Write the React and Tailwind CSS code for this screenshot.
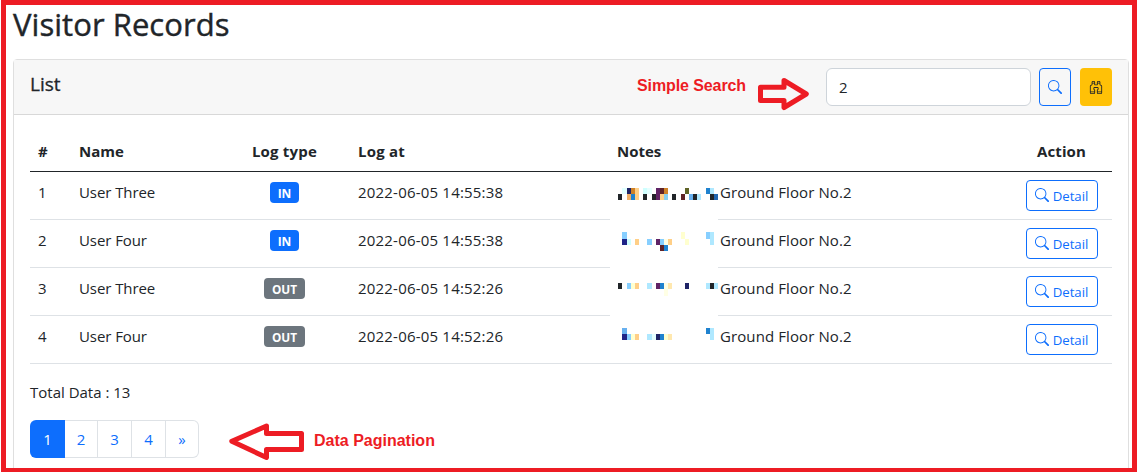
import React from "react";
import { BsSearch, BsBinoculars } from "react-icons/bs";

// Pixelated redaction blocks: [x, y, width, height, colour]
const K = "#212529";
const MASKS = [
  [
    [12, 8, 5, 6, "#e0ffff"], [17, 8, 4, 6, "#1f2466"], [21, 8, 4, 6, "#cf8227"], [25, 8, 4, 6, "#ffcf87"],
    [33, 8, 4, 6, "#cfffff"], [37, 8, 5, 6, "#e5ffff"], [46, 8, 4, 6, "#5f2365"], [50, 8, 4, 6, "#5f2327"],
    [54, 8, 4, 6, "#cf8227"], [75, 8, 4, 6, "#5f6327"], [96, 8, 4, 6, "#1f82cf"], [100, 8, 4, 6, "#afe8ff"],
    [8, 14, 4, 6, K], [17, 14, 4, 6, "#efb067"], [21, 14, 4, 6, "#1f82cf"], [25, 14, 4, 6, "#ffcf87"],
    [33, 14, 4, 6, K], [42, 14, 4, 6, K], [46, 14, 4, 6, "#5f2365"], [50, 14, 4, 6, "#ffcf87"],
    [54, 14, 4, 6, "#87cfef"], [62, 14, 4, 6, K], [71, 14, 4, 6, "#5f2327"], [79, 14, 4, 6, "#67b0ef"],
    [83, 14, 4, 6, K], [87, 14, 4, 6, "#afe8ff"], [100, 14, 4, 6, K], [104, 14, 4, 6, "#2065af"],
  ],
  [
    [12, 4, 5, 7, "#87cfff"], [71, 4, 4, 7, "#ffffcf"], [96, 4, 4, 7, "#87cfff"], [100, 4, 4, 7, "#afe8ff"],
    [12, 11, 5, 6, "#1f2487"], [17, 11, 4, 6, "#cfffff"], [25, 11, 4, 6, "#ffcf87"], [37, 11, 5, 6, "#87cfff"],
    [46, 11, 4, 6, "#5f2365"], [50, 11, 4, 6, "#87cfff"], [54, 11, 4, 6, "#ffffe5"], [58, 11, 4, 6, "#ffcf87"],
    [75, 11, 4, 6, "#ffffcf"], [100, 11, 4, 6, "#afe8ff"],
    [50, 17, 4, 6, "#5f2327"], [54, 17, 4, 6, "#1f82cf"],
  ],
  [
    [8, 7, 4, 6, K], [17, 7, 4, 6, "#87cfff"], [21, 7, 4, 6, "#ffffcf"], [25, 7, 4, 6, "#ffcf87"],
    [37, 7, 5, 6, "#afe8ff"], [46, 7, 4, 6, "#5f2365"], [50, 7, 4, 6, "#1f82cf"], [54, 7, 4, 13, "#ffffe5"],
    [58, 7, 4, 6, "#ffe8af"], [75, 7, 4, 6, "#1f2466"], [96, 7, 4, 6, "#afe8ff"], [100, 7, 4, 6, K],
    [104, 7, 4, 6, "#afe8ff"],
  ],
  [
    [12, 4, 5, 6, "#67b0ef"], [96, 4, 4, 6, "#1f82cf"], [100, 4, 4, 12, "#afe8ff"],
    [12, 10, 5, 6, "#1f2487"], [17, 10, 4, 6, "#87cfff"], [21, 10, 4, 6, "#ffffcf"], [25, 10, 4, 6, "#ffcf87"],
    [37, 10, 5, 6, "#afe8ff"], [42, 10, 4, 6, "#e5ffff"], [46, 10, 4, 6, "#1f2466"], [50, 10, 4, 6, "#1f82cf"],
    [54, 10, 4, 6, "#ffffcf"], [58, 10, 4, 6, "#ffe8af"],
  ],
];

const ROWS = [
  { name: "User Three", type: "IN", at: "2022-06-05 14:55:38" },
  { name: "User Four", type: "IN", at: "2022-06-05 14:55:38" },
  { name: "User Three", type: "OUT", at: "2022-06-05 14:52:26" },
  { name: "User Four", type: "OUT", at: "2022-06-05 14:52:26" },
];

const GRID = "grid grid-cols-[41px_148px_131px_259px_402px_101px]";

function Badge({ type }) {
  return type === "IN" ? (
    <span className="mt-[2px] flex h-[21px] w-[29px] items-center justify-center rounded bg-[#0d6efd] pt-[2px] text-[12px] font-bold leading-none text-white">IN</span>
  ) : (
    <span className="mt-[2px] flex h-[21px] w-[41px] items-center justify-center rounded bg-[#6c757d] pt-[2px] text-[11.8px] font-bold leading-none text-white">OUT</span>
  );
}

function Row({ row, index }) {
  return (
    <div className={`${GRID} h-12 border-b border-[#dee2e6] pt-2 leading-6`}>
      <div className="px-2">{index + 1}</div>
      <div className="px-2 tracking-[-0.08px]">{row.name}</div>
      <div className="flex items-start justify-center">
        <Badge type={row.type} />
      </div>
      <div className="px-2 tracking-[0.2px]">{row.at}</div>
      <div className="relative pl-[111px] tracking-[0.1px]">
        <svg
          className={`absolute left-px -top-2 bg-white ${index < 3 ? "h-12" : "h-[47px]"}`}
          width="108"
          viewBox={index < 3 ? "0 -8 108 48" : "0 -8 108 47"}
          shapeRendering="crispEdges"
        >
          {MASKS[index].map(([x, y, w, h, c], i) => (
            <rect key={i} x={x} y={y} width={w} height={h} fill={c} />
          ))}
        </svg>
        Ground Floor No.2
      </div>
      <div className="flex justify-center">
        <button className="flex h-[31px] w-[72px] items-center justify-center gap-[4px] rounded border border-[#0d6efd] text-[13.2px] text-[#0d6efd]">
          <BsSearch size={14} className="mb-px" />
          <span>Detail</span>
        </button>
      </div>
    </div>
  );
}

function Pagination() {
  const link = "flex h-full items-center justify-center border-y border-r border-[#dee2e6] text-[#0d6efd]";
  return (
    <div className="flex h-[38px]">
      <a className="flex h-full w-[35px] items-center justify-center rounded-l-md bg-[#0d6efd] text-white">1</a>
      <a className={`${link} w-[33px]`}>2</a>
      <a className={`${link} w-[34px]`}>3</a>
      <a className={`${link} w-[34px]`}>4</a>
      <a className={`${link} w-[33px] rounded-r-md`}>»</a>
    </div>
  );
}

export default function App() {
  return (
    <div className="relative h-[472px] w-[1138px] overflow-hidden bg-white px-px font-['Open_Sans','Noto_Sans',sans-serif] text-[15px] text-[#212529]">
      <div className="h-full overflow-hidden border-[5px] border-b-4 border-[#ed1c24] pl-[7px] pr-[3px]">
        <h1 className="h-[54px] text-[31px] font-medium leading-[38px] tracking-[0.05px] [-webkit-text-stroke:0.4px_#212529]">Visitor Records</h1>
        <div className="h-[460px] rounded border border-[#dfdfdf]">
          <div className="flex h-[55px] items-start border-b border-[#d8d8d8] bg-[#f7f7f7] px-4 pt-2">
            <h2 className="flex-1 pt-[4px] text-[19px] font-medium leading-6 [-webkit-text-stroke:0.3px_#212529]">List</h2>
            <input
              className="h-[38px] w-[205px] rounded-md border border-[#ced4da] bg-white px-3 outline-none"
              defaultValue="2"
            />
            <button className="ml-2 flex h-[38px] w-8 items-center justify-center rounded border border-[#0d6efd] text-[#0d6efd]">
              <BsSearch size={14} />
            </button>
            <button className="ml-[9px] flex h-[38px] w-8 items-center justify-center rounded bg-[#ffc107] text-[#212529]">
              <BsBinoculars size={14} />
            </button>
          </div>
          <div className="px-4 pt-4">
            <div className={`${GRID} h-[41px] border-b border-[#212529] pt-2 font-bold leading-6`}>
              <div className="px-2">#</div>
              <div className="px-2">Name</div>
              <div className="text-center tracking-[0.2px]">Log type</div>
              <div className="px-2 tracking-[0.2px]">Log at</div>
              <div className="px-2">Notes</div>
              <div className="text-center tracking-[0.1px]">Action</div>
            </div>
            {ROWS.map((row, i) => (
              <Row key={i} row={row} index={i} />
            ))}
            <p className="mb-4 mt-4 leading-6">Total Data : 13</p>
            <Pagination />
          </div>
        </div>
      </div>

      <span className="absolute left-[637px] top-[76px] whitespace-nowrap font-['Liberation_Sans',sans-serif] text-[16px] font-bold leading-5 tracking-[-0.1px] text-[#ed1c24]">Simple Search</span>
      <svg className="absolute left-[756px] top-[76px]" width="56" height="36" viewBox="756 76 56 36" fill="none" stroke="#ed1c24" strokeWidth="5" strokeLinejoin="round">
        <path d="M760.5 87.3H784V80.5L806.3 94L784 107.5V100.5H760.5Z" />
      </svg>
      <span className="absolute left-[314px] top-[431px] whitespace-nowrap font-['Liberation_Sans',sans-serif] text-[16px] font-bold leading-5 text-[#ed1c24]">Data Pagination</span>
      <svg className="absolute left-[226px] top-[420px]" width="82" height="44" viewBox="226 420 82 44" fill="none" stroke="#ed1c24" strokeWidth="5" strokeLinejoin="round">
        <path d="M301.5 433.5H266.5V426L231.8 441.3L266.5 457.5V449.5H301.5Z" />
      </svg>
    </div>
  );
}
